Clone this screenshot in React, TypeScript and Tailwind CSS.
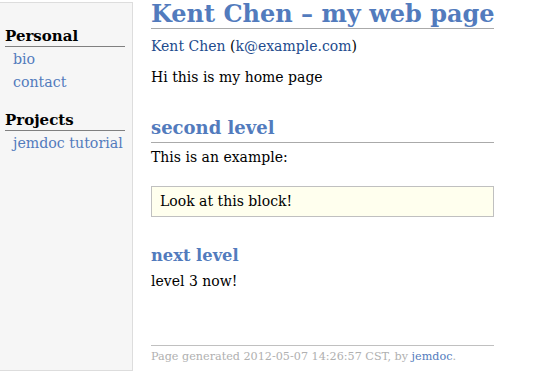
export default function App() {
  const serif = { fontFamily: '"DejaVu Serif", Georgia, serif' };
  return (
    <div className="w-[538px] h-[378px] bg-white overflow-hidden text-black" style={serif}>
      <div className="flex items-start">
        <div className="mt-[2px] w-[133px] h-[369px] bg-[#f6f6f6] border border-l-0 border-[#dddddd] pl-[5px] pr-[7px] pt-[24px]">
          <div className="font-bold text-[15px] leading-[18px] border-b border-[#808080] pb-[1px]">Personal</div>
          <div className="pl-[8px] pt-[1px] text-[#527bbd] text-[14.2px] leading-[23px]">
            <div>bio</div>
            <div>contact</div>
          </div>
          <div className="font-bold text-[15px] leading-[18px] border-b border-[#808080] pb-[1px] mt-[17px]">Projects</div>
          <div className="pl-[8px] pt-[1px] text-[#527bbd] text-[14.2px] leading-[23px] whitespace-nowrap">
            <div>jemdoc tutorial</div>
          </div>
        </div>
        <div className="ml-[18px] w-[343px]">
          <h1 className="text-[#527bbd] font-bold text-[24px] leading-[25px] pt-[1px] pb-[2px] border-b border-[#aaaaaa] whitespace-nowrap">Kent Chen – my web page</h1>
          <p className="text-[14px] leading-[20px] mt-[7px]"><span className="text-[#224b8d]">Kent Chen</span> (<span className="text-[#224b8d]">k@example.com</span>)</p>
          <p className="text-[14px] leading-[20px] mt-[11px]">Hi this is my home page</p>
          <h2 className="text-[#527bbd] font-bold text-[18px] leading-[22px] pb-[3px] border-b border-[#aaaaaa] mt-[30px]">second level</h2>
          <p className="text-[14px] leading-[20px] mt-[4px]">This is an example:</p>
          <div className="mt-[19px] border border-[#c0c0c0] bg-[#ffffee] px-[8px] h-[31px] flex items-center text-[14px]">Look at this block!</div>
          <h3 className="text-[#527bbd] font-bold text-[16.3px] leading-[20px] mt-[29px]">next level</h3>
          <p className="text-[14px] leading-[20px] mt-[5px]">level 3 now!</p>
          <div className="mt-[54px] border-t border-[#c0c0c0] pt-[4px] text-[11.2px] leading-[14px] text-[#b0b0b0] whitespace-nowrap">
            Page generated 2012-05-07 14:26:57 CST, by <span className="text-[#527bbd]">jemdoc</span>.
          </div>
        </div>
      </div>
    </div>
  );
}
